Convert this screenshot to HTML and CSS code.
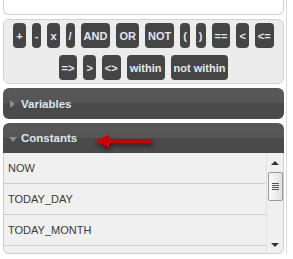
FILE: index.html
```html
<!DOCTYPE html>
<html>
<head>
<meta charset="utf-8">
<link rel="stylesheet" href="styles.css">
</head>
<body>
<div class="wrap">
  <div class="top"></div>
  <div class="ops">
    <div class="row">
      <span class="btn">+</span><span class="btn">-</span><span class="btn">x</span><span class="btn">/</span><span class="btn">AND</span><span class="btn">OR</span><span class="btn">NOT</span><span class="btn">(</span><span class="btn">)</span><span class="btn">==</span><span class="btn">&lt;</span><span class="btn">&lt;=</span>
    </div>
    <div class="row">
      <span class="btn">=&gt;</span><span class="btn">&gt;</span><span class="btn">&lt;&gt;</span><span class="btn">within</span><span class="btn">not within</span>
    </div>
  </div>
  <div class="hdr closed"><span class="tri-r"></span>Variables</div>
  <div class="acc">
    <div class="hdr open"><span class="tri-d"></span>Constants</div>
    <div class="list">
      <div class="items">
        <div class="item">NOW</div>
        <div class="item">TODAY_DAY</div>
        <div class="item">TODAY_MONTH</div>
        <div class="item"></div>
      </div>
      <div class="sbar">
        <span class="up"></span>
        <div class="thumb"><i></i><i></i><i></i><i></i></div>
        <span class="down"></span>
      </div>
    </div>
  </div>
  <svg class="pointer" width="64" height="22" viewBox="0 0 64 22">
    <path d="M1 8 L15 2 L15 6 L58 6 L58 10 L15 10 L15 15 Z" fill="#c80000"/>
  </svg>
</div>
</body>
</html>
```
FILE: styles.css
```css
* { box-sizing: border-box; }
body {
  margin: 0;
  background: #fff;
  font-family: "Liberation Sans", Arial, sans-serif;
}
.wrap {
  position: relative;
  width: 281px;
  margin-left: 3px;
  display: flex;
  flex-direction: column;
  gap: 4px;
}
.wrap::after {
  content: "";
  position: absolute;
  right: -3px;
  top: 0;
  bottom: -2px;
  width: 1px;
  background: #dcdcdc;
}
.top {
  height: 15px;
  border: 1px solid #d2d2d2;
  border-top: none;
  border-radius: 0 0 6px 6px;
  background: #fff;
}
.ops {
  height: 65px;
  border: 1px solid #d2d2d2;
  border-radius: 6px;
  background: #ececec;
  padding: 3px 0;
  display: flex;
  flex-direction: column;
  gap: 7px;
}
.row {
  display: flex;
  justify-content: center;
  gap: 6px;
}
.btn {
  height: 25px;
  display: flex;
  align-items: center;
  padding: 0 3px;
  background: #454545;
  color: #e3e8ef;
  font-size: 11px;
  font-weight: bold;
  border-radius: 4px;
  white-space: pre;
}
.hdr {
  height: 31px;
  border-radius: 6px;
  background: linear-gradient(#585858 0, #565656 50%, #4a4a4a 50%, #4a4a4a 100%);
  color: #dde7f2;
  font-size: 11.5px;
  font-weight: bold;
  display: flex;
  align-items: center;
  padding-left: 6px;
}
.tri-r {
  width: 0; height: 0;
  border-left: 5px solid #8c8c8c;
  border-top: 4px solid transparent;
  border-bottom: 4px solid transparent;
  margin-right: 6px;
  margin-left: 1px;
}
.tri-d {
  width: 0; height: 0;
  border-top: 5px solid #8c8c8c;
  border-left: 4px solid transparent;
  border-right: 4px solid transparent;
  margin-right: 4px;
  margin-left: 0;
  margin-top: 2px;
}
.acc { display: flex; flex-direction: column; }
.hdr.open {
  height: 30px;
  border-radius: 6px 6px 0 0;
}
.list {
  height: 101px;
  border: 1px solid #cdcdcd;
  border-top: none;
  border-radius: 0 0 6px 6px;
  background: #f0f0f0;
  display: flex;
  overflow: hidden;
}
.items { flex: 1; }
.item {
  height: 31px;
  border-bottom: 1px solid #cfcfcf;
  display: flex;
  align-items: center;
  padding-left: 4px;
  font-size: 11px;
  color: #3a3a3a;
}
.sbar {
  width: 17px;
  border-left: 1px solid #e2e2e2;
  background: #f0f0f0;
  display: flex;
  flex-direction: column;
  align-items: center;
  padding-top: 8px;
}
.up {
  width: 0; height: 0;
  border-bottom: 4px solid #333;
  border-left: 4px solid transparent;
  border-right: 4px solid transparent;
}
.thumb {
  margin-top: 7px;
  width: 15px;
  height: 29px;
  border: 1px solid #9a9a9a;
  border-radius: 2px;
  background: linear-gradient(to right, #fafafa, #e2e2e2);
  display: flex;
  flex-direction: column;
  align-items: center;
  justify-content: center;
  gap: 1px;
}
.thumb i {
  display: block;
  width: 7px;
  height: 1px;
  background: #555;
}
.down {
  margin-top: 42px;
  width: 0; height: 0;
  border-top: 4px solid #333;
  border-left: 4px solid transparent;
  border-right: 4px solid transparent;
}
.pointer {
  position: absolute;
  left: 91px;
  top: 133px;
  filter: drop-shadow(1px 3px 2px rgba(0,0,0,0.5));
}
```
